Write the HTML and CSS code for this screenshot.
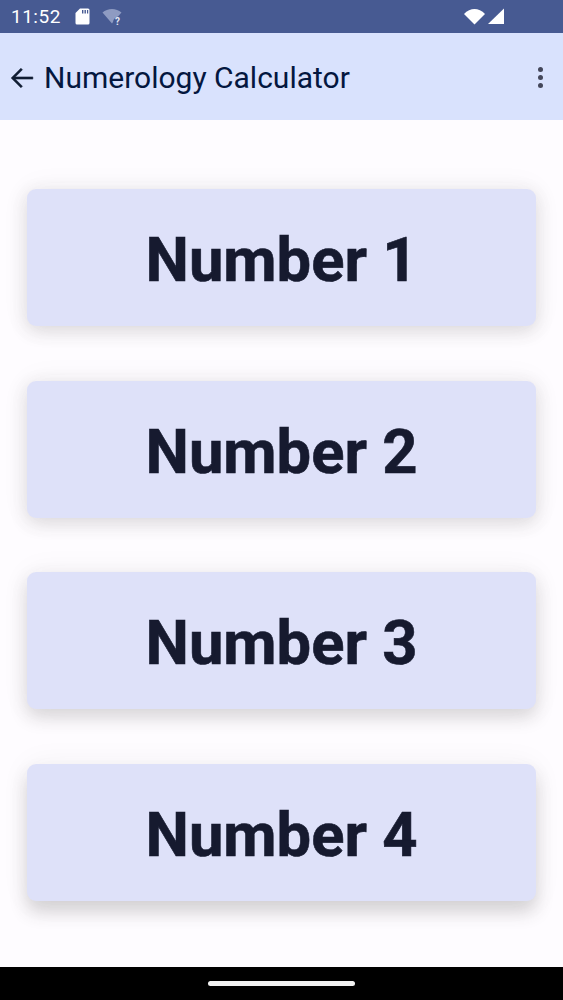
FILE: index.html
```html
<!DOCTYPE html>
<html lang="en">
<head>
    <meta charset="UTF-8">
    <meta name="viewport" content="width=device-width, initial-scale=1.0">
    <title>Numerology Calculator</title>
    <link rel="stylesheet" href="styles.css">
</head>
<body>
    <div class="status-bar">
        <span class="time">11:52</span>
        <svg class="sd-icon" width="15" height="17" viewBox="0 0 15 17">
            <path fill="#fff" d="M5 0.500H13A1.500 1.500 0 0 1 14.500 2V15A1.500 1.500 0 0 1 13 16.500H2A1.500 1.500 0 0 1 0.500 15V5Z"/>
            <path fill="#475a92" d="M7 2h1.400v3.400H7zM9.500 2h1.400v3.400H9.500zM12 2h1.200v3.400H12z"/>
        </svg>
        <svg class="wifi-off-icon" width="22" height="18" viewBox="0 0 22 18">
            <path fill="#8e9bc2" d="M0.500 4.500C3 2.300 6.500 1 10 1S16.800 2.300 19.500 4.500L16 8.500A6.500 6.500 0 0 0 11 14L10 15.500Z"/>
            <text x="13" y="17" class="wifi-mark">?</text>
        </svg>
        <div class="status-right">
            <svg width="22" height="17" viewBox="0 0 22 17">
                <path fill="#fff" d="M0 6C3 2.500 7 1 10.500 1S18 2.500 21 6L10.500 16.500Z"/>
            </svg>
            <svg width="18" height="17" viewBox="0 0 18 17">
                <path fill="#fff" d="M17 0.500V16H1Z"/>
            </svg>
        </div>
    </div>

    <header class="app-bar">
        <svg class="back-icon" width="26" height="26" viewBox="0 0 24 24">
            <path fill="#111d33" stroke="#111d33" stroke-width="0.5" d="M22 11H5.800l6.600-6.600L11 3 2 12l9 9 1.400-1.400L5.800 13H22z"/>
        </svg>
        <h1 class="title">Numerology Calculator</h1>
        <div class="menu-dots">
            <span></span>
            <span></span>
            <span></span>
        </div>
    </header>

    <main class="number-list">
        <button class="number-card">Number 1</button>
        <button class="number-card">Number 2</button>
        <button class="number-card">Number 3</button>
        <button class="number-card">Number 4</button>
    </main>

    <div class="nav-bar">
        <div class="nav-pill"></div>
    </div>
</body>
</html>
```

FILE: styles.css
```css
* {
    box-sizing: border-box;
}
body {
    margin: 0;
    width: 563px;
    height: 1000px;
    display: flex;
    flex-direction: column;
    font-family: Roboto, "Liberation Sans", sans-serif;
    background-color: #fefcff;
    overflow: hidden;
}
.status-bar {
    height: 33px;
    flex-shrink: 0;
    display: flex;
    align-items: center;
    padding: 0 52px 0 11px;
    background-color: #475a92;
    color: #fff;
}
.time {
    font-size: 19px;
    letter-spacing: 0.5px;
    margin-right: 14px;
}
.sd-icon {
    margin-right: 12px;
}
.wifi-mark {
    font-size: 10px;
    font-weight: 700;
    fill: #e4e8f4;
}
.status-right {
    margin-left: auto;
    display: flex;
    align-items: center;
    gap: 1px;
    margin-right: 6px;
}
.app-bar {
    height: 87px;
    flex-shrink: 0;
    display: flex;
    align-items: center;
    padding: 2px 20px 0 9px;
    background-color: #d9e2fd;
}
.back-icon {
    margin-right: 9px;
}
.title {
    margin: 0;
    flex: 1;
    font-size: 30px;
    font-weight: 400;
    color: #04173f;
}
.menu-dots {
    display: flex;
    flex-direction: column;
    gap: 3px;
}
.menu-dots span {
    width: 5px;
    height: 5px;
    border-radius: 50%;
    background-color: #44475a;
}
.number-list {
    flex: 1;
    display: flex;
    flex-direction: column;
    gap: 54.5px;
    padding: 69px 27px 0;
}
.number-card {
    height: 137px;
    flex-shrink: 0;
    padding: 5px 0 0;
    border: none;
    border-radius: 9px;
    background-color: #dee1f9;
    color: #161a2f;
    font-family: inherit;
    font-size: 61.5px;
    font-weight: 700;
    -webkit-text-stroke: 0.6px #161a2f;
    box-shadow: 0 5px 18px rgba(60, 55, 55, 0.16), 0 0 30px rgba(60, 55, 55, 0.05);
}
.number-card:nth-child(3) {
    box-shadow: 0 8px 18px rgba(60, 55, 55, 0.18), 0 0 30px rgba(60, 55, 55, 0.05);
}
.number-card:nth-child(4) {
    box-shadow: 0 11px 18px rgba(60, 55, 55, 0.2), 0 0 30px rgba(60, 55, 55, 0.05);
}
.nav-bar {
    height: 33px;
    flex-shrink: 0;
    display: flex;
    justify-content: center;
    align-items: center;
    background-color: #000;
}
.nav-pill {
    width: 147px;
    height: 5px;
    border-radius: 3px;
    background-color: #f2f2f2;
}
```
